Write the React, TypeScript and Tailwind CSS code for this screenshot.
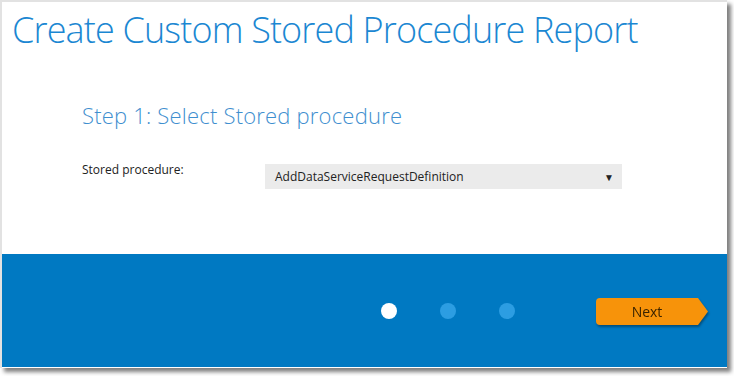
const font = { fontFamily: '"Open Sans", "Liberation Sans", sans-serif' };

function StepDots({ active }: { active: number }) {
  return (
    <div className="flex items-center gap-[43px]">
      {[0, 1, 2].map((i) => (
        <span
          key={i}
          className={
            i === active
              ? 'w-[16px] h-[16px] rounded-full bg-white'
              : 'w-[16px] h-[16px] rounded-full bg-[#2c9de2]'
          }
        />
      ))}
    </div>
  );
}

function NextButton() {
  return (
    <div className="relative flex h-[27px] drop-shadow-[1px_2px_1px_rgba(0,0,0,0.35)]">
      <button className="w-[101px] h-[27px] bg-[#f7930a] rounded-l-[4px] text-[14px] text-[#3b2400] pl-[1px]">
        Next
      </button>
      <svg width="11" height="27" viewBox="0 0 11 27" className="block">
        <polygon points="0,0 1,0 11,13.5 1,27 0,27" fill="#f7930a" />
      </svg>
    </div>
  );
}

export default function App() {
  return (
    <div className="w-[734px] h-[376px] bg-white overflow-hidden" style={font}>
      <div className="w-[727px] h-[368px] border-l-2 border-t-2 border-[#e2e2e2] bg-white pb-[1px] shadow-[4px_4px_4px_rgba(0,0,0,0.5)] flex flex-col">
        <div className="h-[252px] flex flex-col">
          <h1 className="pl-[10px] pt-[4px] text-[36px] leading-[48px] font-light text-[#1b87d2] tracking-[-0.85px]">
            Create Custom Stored Procedure Report
          </h1>
          <h2 className="pl-[80px] mt-[46px] text-[22px] leading-[30px] font-light text-[#3f8fcf] tracking-[0.2px]">
            Step 1: Select Stored procedure
          </h2>
          <div className="flex items-start pl-[80px] mt-[30px]">
            <label className="w-[183px] text-[12px] leading-[16px] text-[#222] mt-[2px]">
              Stored procedure:
            </label>
            <div className="w-[357px] h-[25px] bg-[#ebebeb] flex items-center justify-between pl-[10px] pr-[8px] mt-[4px]">
              <span className="text-[12px] text-[#222]">AddDataServiceRequestDefinition</span>
              <span className="text-[10px] text-[#222] leading-none">▼</span>
            </div>
          </div>
        </div>
        <div className="flex-1 bg-[#0079c2] flex items-start pt-[44px] pl-[379px]">
          <div className="mt-[5px]">
            <StepDots active={0} />
          </div>
          <div className="ml-[81px]">
            <NextButton />
          </div>
        </div>
      </div>
    </div>
  );
}
